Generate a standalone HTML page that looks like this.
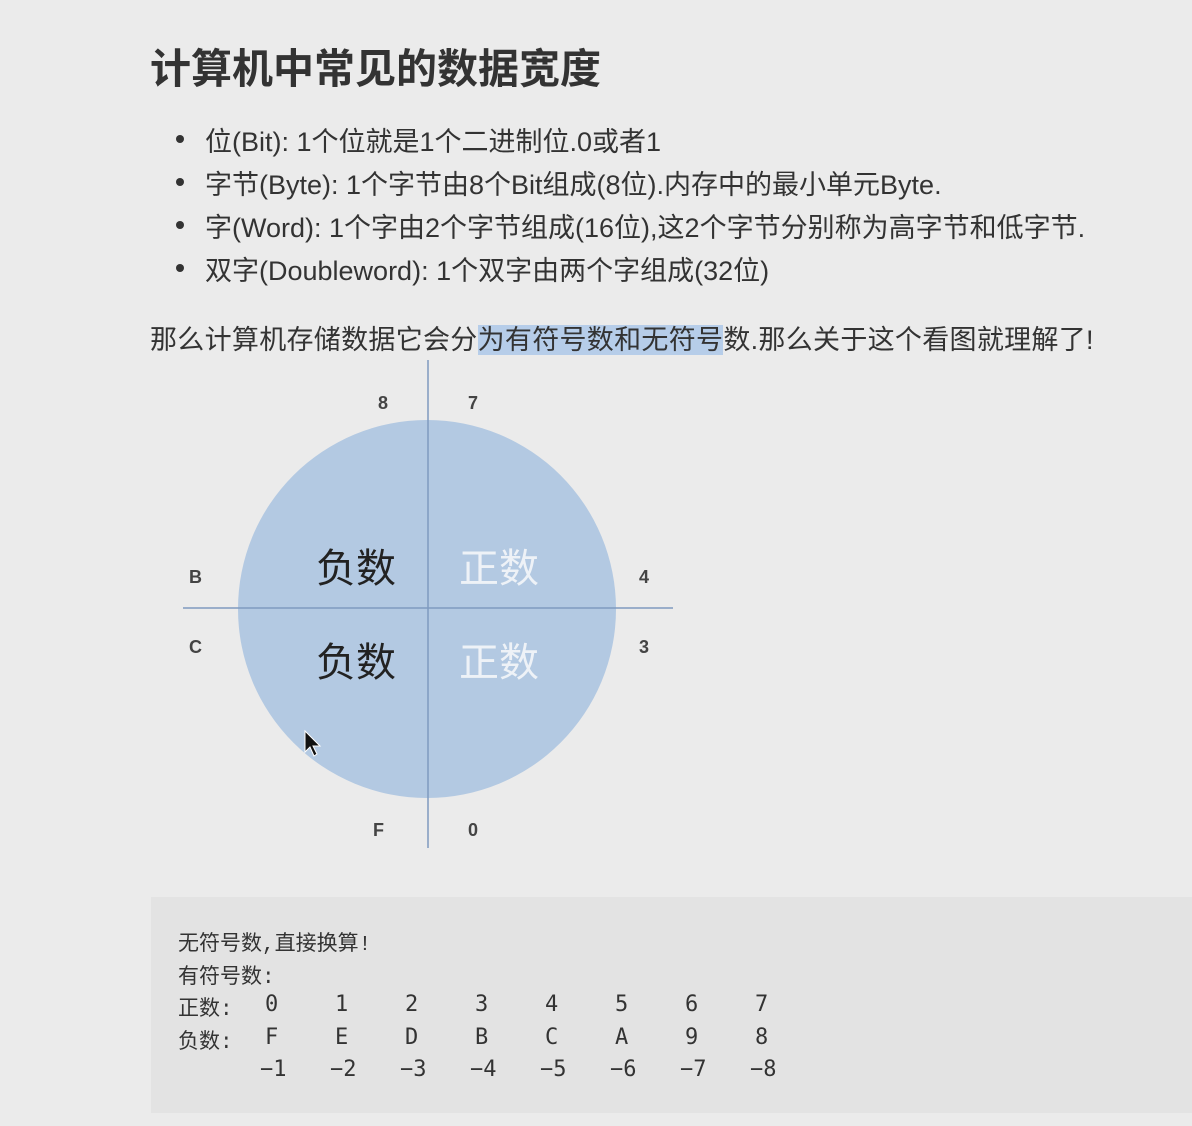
<!DOCTYPE html>
<html><head><meta charset="utf-8"><style>
html,body{margin:0;padding:0}
body{width:1192px;height:1126px;background:#ebebeb;position:relative;overflow:hidden;font-family:"Liberation Sans","Noto Sans CJK SC",sans-serif;color:#333}
.a{position:absolute;white-space:nowrap}
h1{position:absolute;left:150px;top:35px;margin:0;font-size:41px;font-weight:bold;color:#333;letter-spacing:0}
.li{font-size:27px;left:205px;letter-spacing:0}
.dot{position:absolute;left:176px;width:8px;height:8px;border-radius:50%;background:#333}
.p{font-size:27px;left:150px;top:318px;letter-spacing:0.3px}
.hl{background:#b6cde9}
.code{position:absolute;left:151px;top:897px;width:1041px;height:216px;background:#e3e3e3}
.m{font-family:"Liberation Mono","Noto Sans CJK SC",monospace;font-size:21px;color:#333;position:absolute;white-space:nowrap}
.n{font-family:"DejaVu Sans Mono","Liberation Mono",monospace;font-size:22px;color:#333;position:absolute;white-space:nowrap}
</style></head><body>
<h1>计算机中常见的数据宽度</h1>
<div class="dot" style="top:135px"></div>
<div class="a li" style="top:120px">位(Bit): 1个位就是1个二进制位.0或者1</div>
<div class="dot" style="top:178px"></div>
<div class="a li" style="top:163px">字节(Byte): 1个字节由8个Bit组成(8位).内存中的最小单元Byte.</div>
<div class="dot" style="top:221px"></div>
<div class="a li" style="top:206px">字(Word): 1个字由2个字节组成(16位),这2个字节分别称为高字节和低字节.</div>
<div class="dot" style="top:264px"></div>
<div class="a li" style="top:249px">双字(Doubleword): 1个双字由两个字组成(32位)</div>
<div class="a p">那么计算机存储数据它会分<span class="hl">为有符号数和无符号</span>数.那么关于这个看图就理解了!</div>

<svg class="a" style="left:0;top:0" width="1192" height="890">
<circle cx="427" cy="609" r="189" fill="#b3c9e2"/>
<line x1="428" y1="360" x2="428" y2="848" stroke="#7f9ac0" stroke-width="1.5"/>
<line x1="183" y1="608" x2="673" y2="608" stroke="#7f9ac0" stroke-width="1.5"/>
<text x="316" y="582" font-size="40" fill="#222" font-family="Noto Sans CJK SC,sans-serif">负数</text>
<text x="316" y="676" font-size="40" fill="#222" font-family="Noto Sans CJK SC,sans-serif">负数</text>
<text x="459" y="582" font-size="40" fill="#eef2f7" font-family="Noto Sans CJK SC,sans-serif">正数</text>
<text x="459" y="676" font-size="40" fill="#eef2f7" font-family="Noto Sans CJK SC,sans-serif">正数</text>
<g font-family="Liberation Sans,sans-serif" font-size="18" fill="#444" font-weight="bold">
<text x="378" y="409">8</text><text x="468" y="409">7</text>
<text x="189" y="583">B</text><text x="639" y="583">4</text>
<text x="189" y="653">C</text><text x="639" y="653">3</text>
<text x="373" y="836">F</text><text x="468" y="836">0</text>
</g>
<path d="M305 731 L305 752 L310 747 L314 756 L317 754 L313 746 L320 746 Z" fill="#111" stroke="#fff" stroke-width="1"/>
</svg>

<div class="code"></div>
<div class="m" style="left:178px;top:927px">无符号数,直接换算!</div>
<div class="m" style="left:178px;top:960px">有符号数:</div>
<div class="m" style="left:178px;top:992px">正数:</div>
<div class="m" style="left:178px;top:1025px">负数:</div>
<div class="n" style="left:265px;top:992px">0</div><div class="n" style="left:335px;top:992px">1</div><div class="n" style="left:405px;top:992px">2</div><div class="n" style="left:475px;top:992px">3</div><div class="n" style="left:545px;top:992px">4</div><div class="n" style="left:615px;top:992px">5</div><div class="n" style="left:685px;top:992px">6</div><div class="n" style="left:755px;top:992px">7</div>
<div class="n" style="left:265px;top:1025px">F</div><div class="n" style="left:335px;top:1025px">E</div><div class="n" style="left:405px;top:1025px">D</div><div class="n" style="left:475px;top:1025px">B</div><div class="n" style="left:545px;top:1025px">C</div><div class="n" style="left:615px;top:1025px">A</div><div class="n" style="left:685px;top:1025px">9</div><div class="n" style="left:755px;top:1025px">8</div>
<div class="n" style="left:260px;top:1057px">−1</div><div class="n" style="left:330px;top:1057px">−2</div><div class="n" style="left:400px;top:1057px">−3</div><div class="n" style="left:470px;top:1057px">−4</div><div class="n" style="left:540px;top:1057px">−5</div><div class="n" style="left:610px;top:1057px">−6</div><div class="n" style="left:680px;top:1057px">−7</div><div class="n" style="left:750px;top:1057px">−8</div>
</body></html>
